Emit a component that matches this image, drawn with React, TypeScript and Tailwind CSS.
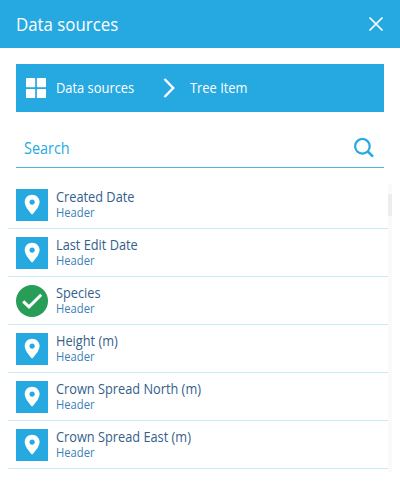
const items = [
  { title: 'Created Date', selected: false },
  { title: 'Last Edit Date', selected: false },
  { title: 'Species', selected: true },
  { title: 'Height (m)', selected: false },
  { title: 'Crown Spread North (m)', selected: false },
  { title: 'Crown Spread East (m)', selected: false },
];

function PinIcon() {
  return (
    <span className="flex size-8 shrink-0 items-center justify-center bg-[#26a9e1]">
      <svg className="size-6" viewBox="0 0 24 24" fill="white">
        <path d="M12.1 1.7C8 1.7 4.7 4.9 4.7 9c0 5.4 7.4 12.7 7.4 12.7S19.6 14.4 19.6 9c0-4.1-3.4-7.3-7.5-7.3zm0 10a2.6 2.6 0 1 1 0-5.2 2.6 2.6 0 0 1 0 5.2z" />
      </svg>
    </span>
  );
}

function CheckIcon() {
  return (
    <svg className="size-8 shrink-0" viewBox="0 0 32 32" fill="none">
      <circle cx="16" cy="16" r="16" fill="#289d58" />
      <path d="M7.2 16.3l5.8 5.6L25.2 9.7" stroke="white" strokeWidth="3" />
    </svg>
  );
}

export default function App() {
  return (
    <div className="h-[487px] w-[400px] overflow-hidden bg-white font-['Open_Sans',sans-serif]">
      <header className="flex h-12 items-center justify-between bg-[#26a9e1] px-4 text-white">
        <h1 className="origin-left scale-x-[0.935] text-[18px] leading-6">Data sources</h1>
        <svg className="size-4" viewBox="0 0 16 16" fill="none" stroke="white" strokeWidth="1.7">
          <path d="M1.5 1.5l13 13M14.5 1.5l-13 13" />
        </svg>
      </header>
      <nav className="mx-4 mt-4 flex h-12 items-center bg-[#26a9e1] pl-[10px] text-[14px] text-white">
        <svg className="size-5" viewBox="0 0 20 20" fill="white">
          <rect width="9.2" height="9.2" rx="0.8" />
          <rect x="10.9" width="9.2" height="9.2" rx="0.8" />
          <rect y="10.9" width="9.2" height="9.2" rx="0.8" />
          <rect x="10.9" y="10.9" width="9.2" height="9.2" rx="0.8" />
        </svg>
        <span className="mb-[2px] ml-[10px] w-[107px] origin-left scale-x-[0.92]">Data sources</span>
        <svg className="h-5 w-3" viewBox="0 0 12 20" fill="none" stroke="white" strokeWidth="2.4">
          <path d="M1.5 1l8.7 9-8.7 9" />
        </svg>
        <span className="mb-[2px] ml-[15px] origin-left scale-x-[0.92]">Tree Item</span>
      </nav>
      <div className="mx-4 mt-4 flex h-10 items-center justify-between border-b border-[#4db5e4] pr-[10px] pl-2 text-[#26a9e1]">
        <span className="mt-[2px] origin-left scale-x-[0.925] text-[15.6px]">Search</span>
        <svg className="size-5" viewBox="0 0 20 20" fill="none" stroke="currentColor" strokeWidth="2.2">
          <circle cx="8.4" cy="8.3" r="7.3" />
          <path d="M13.5 13.3l5.5 5.3" strokeWidth="2.6" />
        </svg>
      </div>
      <div className="mt-[13px] flex pl-2">
        <ul className="w-[380px]">
          {items.map((item) => (
            <li key={item.title} className="flex h-12 gap-2 border-b border-[#cbeafa] pt-2 pl-2">
              {item.selected ? <CheckIcon /> : <PinIcon />}
              <div>
                <div className="origin-left scale-x-[0.912] text-[14px] leading-4 text-[#34608c]">{item.title}</div>
                <div className="origin-left scale-x-[0.935] text-[12px] leading-4 text-[#3a7fb8]">Header</div>
              </div>
            </li>
          ))}
        </ul>
        <div className="mt-[3px] h-[288px] w-1 bg-[#fafafa] pt-[10px]">
          <div className="h-[22px] bg-[#ededed]" />
        </div>
      </div>
    </div>
  );
}
